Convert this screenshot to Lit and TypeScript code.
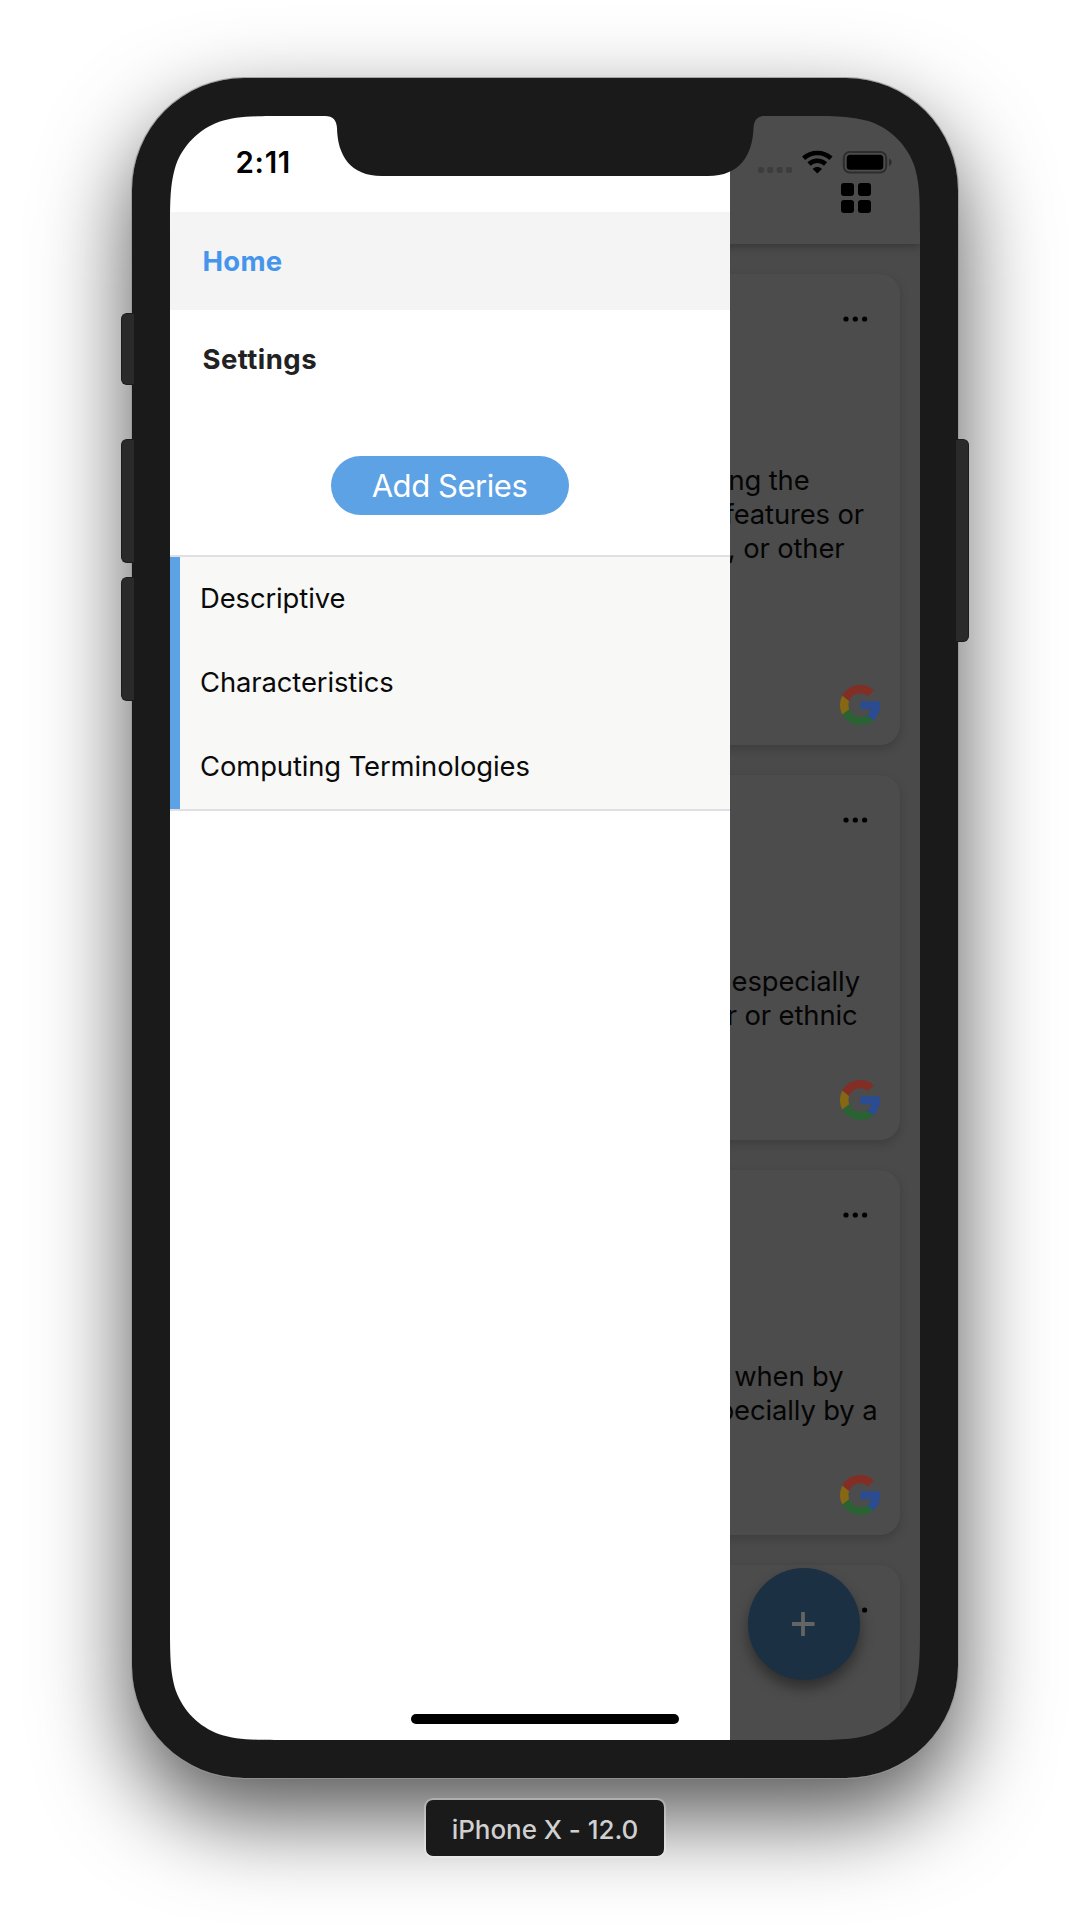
import { LitElement, html, css, svg } from "lit";
import { customElement, property } from "lit/decorators.js";

interface Line { text: string; right: number }
interface CardData { height: number; textTop: number; lines: Line[] }

const CARDS: CardData[] = [
  { height: 471, textTop: 189, lines: [
    { text: "ng the", right: 90.5 },
    { text: "features or", right: 36 },
    { text: ", or other", right: 55.5 } ] },
  { height: 365, textTop: 189, lines: [
    { text: "especially", right: 40 },
    { text: "r or ethnic", right: 42.5 } ] },
  { height: 365, textTop: 189, lines: [
    { text: "when by", right: 56.5 },
    { text: "pecially by a", right: 22.5 } ] },
  { height: 365, textTop: 189, lines: [] },
];

/* Screen opening with continuous corners and the sensor notch, in body coordinates. */
const screenOpening = () => {
  const r = 78;
  const a = 1.528665 * r, b = 1.08849 * r, c = 0.868407 * r, d = 0.631494 * r;
  const e = 0.074911 * r, f = 0.372824 * r, g = 0.16906 * r;
  const X = 38, Y = 38, R = 788, B = 1662;
  return `M${X + a} ${Y} H193 C201 ${Y} 204.5 42 205 50 C205.5 77 218 98 250 98
    H576 C608 98 620.5 77 621.5 50 C622 42 625.5 ${Y} 633.5 ${Y} H${R - a}
    C${R - b} ${Y} ${R - c} ${Y} ${R - d} ${Y + e}
    C${R - f} ${Y + g} ${R - g} ${Y + f} ${R - e} ${Y + d}
    C${R} ${Y + c} ${R} ${Y + b} ${R} ${Y + a} V${B - a}
    C${R} ${B - b} ${R} ${B - c} ${R - e} ${B - d}
    C${R - g} ${B - f} ${R - f} ${B - g} ${R - d} ${B - e}
    C${R - c} ${B} ${R - b} ${B} ${R - a} ${B} H${X + a}
    C${X + b} ${B} ${X + c} ${B} ${X + d} ${B - e}
    C${X + f} ${B - g} ${X + g} ${B - f} ${X + e} ${B - d}
    C${X} ${B - c} ${X} ${B - b} ${X} ${B - a} V${Y + a}
    C${X} ${Y + b} ${X} ${Y + c} ${X + e} ${Y + d}
    C${X + g} ${Y + f} ${X + f} ${Y + g} ${X + d} ${Y + e}
    C${X + c} ${Y} ${X + b} ${Y} ${X + a} ${Y} Z`;
};

const bodyOutline = "M112 0H714A112 112 0 0 1 826 112V1588A112 112 0 0 1 714 1700H112A112 112 0 0 1 0 1588V112A112 112 0 0 1 112 0Z";

const dots = svg`<circle cx="3" cy="3" r="2.6"/><circle cx="12.3" cy="3" r="2.6"/><circle cx="21.6" cy="3" r="2.6"/>`;

@customElement("result-card")
class ResultCard extends LitElement {
  @property({ attribute: false }) card!: CardData;
  static styles = css`
    :host { display: block; flex: none; }
    .card { box-sizing: border-box; height: 100%; display: flex; flex-direction: column;
      background: #4c4c4c; border-radius: 20px; padding: 41.5px 20px 20px 0;
      box-shadow: 0 4px 10px rgba(0,0,0,.17); }
    .more { align-self: flex-end; margin-right: 12px; width: 25px; height: 6px; flex: none; display: block; }
    .text { flex: 1; margin-right: -20px; font-size: 27.4px; line-height: 34px; color: #050505; text-align: right; }
    .line { white-space: pre; letter-spacing: -.12px; }
    .logo { align-self: flex-end; width: 40px; height: 40px; flex: none; display: block; }
  `;
  render() {
    const c = this.card;
    return html`<div class="card">
      <svg class="more" viewBox="0 0 25 6">${dots}</svg>
      <div class="text" style="padding-top:${c.textTop - 47.5}px">
        ${c.lines.map((l) => html`<div class="line" style="padding-right:${l.right}px">${l.text}</div>`)}
      </div>
      <svg class="logo" viewBox="0 0 24 24">
        <path fill="#2b4c90" d="M23.9 9.700H12.200v4.900h6.500c-.5 1.900-1.500 3.100-2.700 3.900l3.900 3c2.600-2.400 4.100-5.700 4.100-9.400 0-.8 0-1.600-.1-2.400z"/>
        <path fill="#2a6234" d="M12.200 24c3.300 0 6-1 7.900-2.700l-4.100-3.200c-1 .7-2.300 1.100-3.800 1.100-3.100 0-5.800-2-6.700-4.900l-4.100 3.300C3.300 21.500 7.400 24 12.200 24z"/>
        <path fill="#866713" d="M5.500 14.500c-.3-.8-.4-1.600-.4-2.500s.1-1.700.4-2.500L1.400 6.300C.5 8 0 9.900 0 12s.5 4 1.400 5.700z"/>
        <path fill="#822e25" d="M12.200 4.900c1.800 0 3.300.6 4.600 1.800L20.300 3.100C18.100 1.100 15.500 0 12.200 0 7.400 0 3.300 2.500 1.400 6.300l4.100 3.300c.9-2.800 3.600-4.700 6.700-4.700z"/>
      </svg>
    </div>`;
  }
}

@customElement("side-drawer")
class SideDrawer extends LitElement {
  static styles = css`
    :host { display: flex; flex-direction: column; background: #fff; }
    .time { height: 96px; box-sizing: border-box; padding: 27px 0 0 65.5px; font-size: 29.5px; line-height: 38px; font-weight: 600; letter-spacing: .7px; color: #000; }
    .nav { height: 98px; box-sizing: border-box; display: flex; align-items: center; padding: 0 0 1px 32.5px; font-size: 27.5px; font-weight: 650; letter-spacing: .45px; color: #222; }
    .active { background: #f4f4f4; color: #4595ec; letter-spacing: .25px; }
    .action { height: 147px; display: flex; justify-content: center; padding-top: 48px; box-sizing: border-box; }
    .add { width: 238px; height: 59px; border: 0; border-radius: 29.5px; background: #5ca2e4; color: #fff; font: 400 31px/59px Inter, sans-serif; letter-spacing: -.45px; padding: 0 1px 0 0; }
    .series { background: #f8f8f7; border-top: 2px solid #e0e0e4; border-bottom: 2px solid #e0e0e4; display: flex; }
    .bar { width: 10px; background: #5ca2e4; }
    .items { flex: 1; }
    .item { height: 84px; line-height: 82px; padding-left: 20px; font-size: 27.4px; letter-spacing: -.1px; color: #0a0a0a; white-space: nowrap; }
  `;
  render() {
    return html`
      <div class="time">2:11</div>
      <div class="nav active">Home</div>
      <div class="nav">Settings</div>
      <div class="action"><button class="add">Add Series</button></div>
      <div class="series"><div class="bar"></div><div class="items">
        ${["Descriptive", "Characteristics", "Computing Terminologies"].map((t) => html`<div class="item">${t}</div>`)}
      </div></div>`;
  }
}

@customElement("app-root")
class AppRoot extends LitElement {
  static styles = css`
    :host { display: block; width: 1090px; height: 1928px; overflow: hidden; background: #fff; font-family: Inter, "Liberation Sans", sans-serif; }
    .stage { display: flex; flex-direction: column; align-items: center; padding-top: 78px; height: 1850px; }
    .phone { position: relative; width: 826px; height: 1700px; border-radius: 112px; flex: none;
      box-shadow: 0 0 0 1px rgba(150,150,150,.8), 0 38px 92px rgba(0,0,0,.68); }
    .screen { position: relative; box-sizing: border-box; width: 754px; height: 1628px; margin: 36px; padding: 2px; border-radius: 76px; overflow: hidden; display: flex; background: #4a4a4a; }
    .phone::before { content: ""; display: table; }
    .drawer { width: 560px; height: 1624px; flex: none; z-index: 2; }
    .behind { flex: 1; margin-left: -60px; display: flex; flex-direction: column; min-width: 0; }
    .header { height: 128px; flex: none; background: #4c4c4c; display: flex; flex-direction: column; align-items: flex-end; box-shadow: 0 3px 8px rgba(0,0,0,.25); }
    .status { display: block; margin: 34px 28px 0 0; width: 134px; height: 24px; flex: none; }
    .grid { display: block; margin: 9px 49px 0 0; width: 30px; height: 30px; flex: none; }
    .feed { display: flex; flex-direction: column; gap: 30px; padding: 30px 20px 0 0; height: 1496px; box-sizing: border-box; overflow: hidden; }
    .fab { position: absolute; left: 580px; top: 1454px; width: 112px; height: 112px; border-radius: 50%; background: #1b3042; box-shadow: 0 8px 14px rgba(0,0,0,.4); display: flex; align-items: center; justify-content: center; }
    .home { position: absolute; z-index: 3; left: 243px; top: 1600px; width: 268px; height: 10px; border-radius: 5px; background: #000; }
    .bezel { position: absolute; inset: 0; width: 826px; height: 1700px; z-index: 4; display: block; }
    .key { position: absolute; box-sizing: border-box; width: 13px; background: #2a2a2a; border: 1px solid #1c1c1c; z-index: 5; }
    .left { left: -11px; border-radius: 6px 0 0 6px; border-right: 0; }
    .right { right: -11px; border-radius: 0 6px 6px 0; border-left: 0; }
    .mute { top: 235px; height: 72px; }
    .up { top: 361px; height: 124px; }
    .down { top: 499px; height: 124px; }
    .power { top: 361px; height: 203px; }
    .label { position: relative; margin-top: 22px; width: 238px; height: 56px; border-radius: 7px; background: #1a1a1a; box-shadow: 0 0 0 2px rgba(255,255,255,.27); color: #d0d0d0; font-size: 26px; font-weight: 500; letter-spacing: -.05px; line-height: 60px; text-align: center; white-space: nowrap; }
  `;
  render() {
    return html`<div class="stage">
      <div class="phone">
        <div class="screen">
          <side-drawer class="drawer"></side-drawer>
          <div class="behind">
            <div class="header">
              <svg class="status" viewBox="0 0 134 24">
                <g fill="#3d3d3d"><rect y="17" width="6" height="6" rx="2"/><rect x="9.3" y="17" width="6" height="6" rx="2"/><rect x="18.6" y="17" width="6" height="6" rx="2"/><rect x="28" y="17" width="6" height="6" rx="2"/></g>
                <g fill="none" stroke="#000" stroke-width="4.6"><path d="M45.600 8.300C53.300 1.200 65.300 1.200 73 8.300"/><path d="M51 14C55.500 9.700 63.100 9.700 67.600 14"/></g>
                <path d="M59.300 23.500L54.700 18.900C57.200 16.500 61.400 16.500 63.900 18.900Z"/>
                <rect x="85.8" y="2" width="42.4" height="20.5" rx="6" fill="none" stroke="#2d2d2d" stroke-width="2"/>
                <rect x="88.7" y="4.7" width="36.6" height="15" rx="3.5"/>
                <path d="M131 8.500C134.600 10 134.600 14.500 131 16Z" fill="#2d2d2d"/>
              </svg>
              <svg class="grid" viewBox="0 0 30 30"><rect width="13" height="13" rx="3"/><rect x="17" width="13" height="13" rx="3"/><rect y="17" width="13" height="13" rx="3"/><rect x="17" y="17" width="13" height="13" rx="3"/></svg>
            </div>
            <div class="feed">${CARDS.map((c) => html`<result-card style="height:${c.height}px" .card=${c}></result-card>`)}</div>
          </div>
          <div class="fab"><svg width="24" height="24" viewBox="0 0 24 24"><path d="M11 0V24M-.5 12H22.500" stroke="#646464" stroke-width="3.8"/></svg></div>
          <div class="home"></div>
        </div>
        <svg class="bezel" viewBox="0 0 826 1700"><path fill="#1a1a1a" fill-rule="evenodd" d="${bodyOutline} ${screenOpening()}"/></svg>
        <div class="key left mute"></div><div class="key left up"></div><div class="key left down"></div><div class="key right power"></div>
      </div>
      <div class="label">iPhone X - 12.0</div>
    </div>`;
  }
}
